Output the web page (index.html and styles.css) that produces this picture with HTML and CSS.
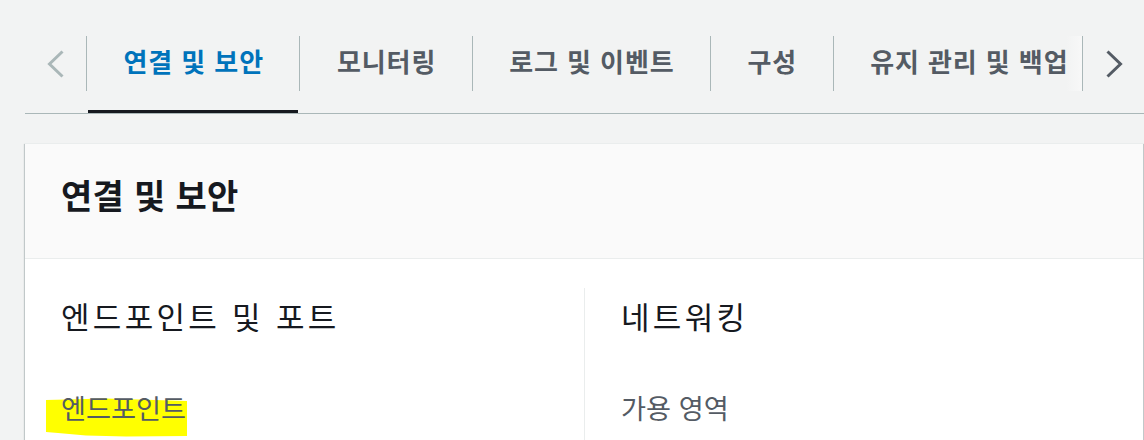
FILE: index.html
```html
<!DOCTYPE html>
<html lang="ko">
<head>
<meta charset="utf-8">
<title>연결 및 보안</title>
<link rel="stylesheet" href="styles.css">
</head>
<body>
<nav class="tabs">
  <button class="nav-btn prev" aria-label="이전">
    <svg width="20" height="30" viewBox="0 0 20 30"><polyline points="16.5,2.5 3.5,15 16.5,27.5" fill="none" stroke="currentColor" stroke-width="3"/></svg>
  </button>
  <div class="tab-scroller">
    <div class="tab active"><span class="tab-label">연결 및 보안</span></div>
    <div class="tab"><span class="tab-label">모니터링</span></div>
    <div class="tab"><span class="tab-label">로그 및 이벤트</span></div>
    <div class="tab"><span class="tab-label">구성</span></div>
    <div class="tab"><span class="tab-label">유지 관리 및 백업</span></div>
  </div>
  <div class="tab-end">
    <button class="nav-btn next" aria-label="다음">
      <svg width="20" height="30" viewBox="0 0 20 30"><polyline points="3.5,2.5 16.5,15 3.5,27.5" fill="none" stroke="currentColor" stroke-width="3"/></svg>
    </button>
  </div>
</nav>

<section class="card">
  <header class="card-header">
    <h2 class="card-title">연결 및 보안</h2>
  </header>
  <div class="card-body">
    <div class="col">
      <h3 class="col-title">엔드포인트 및 포트</h3>
      <div class="field">
        <svg class="highlight" width="141" height="39" viewBox="0 0 141 39"><path d="M0,2 L60,0.5 L141,3 L141,38 L80,38.5 L40,37.5 L12,35 L0,34 Z" fill="#ffff00"/></svg>
        <span class="label">엔드포인트</span>
      </div>
    </div>
    <div class="col">
      <h3 class="col-title">네트워킹</h3>
      <div class="field">
        <span class="label">가용 영역</span>
      </div>
    </div>
  </div>
</section>
</body>
</html>
```

FILE: styles.css
```css
* { box-sizing: border-box; }

body {
  margin: 0;
  background: #f2f3f3;
  font-family: "Noto Sans CJK KR", "Noto Sans", sans-serif;
  color: #16191f;
}

.tabs {
  display: flex;
  align-items: stretch;
  height: 114px;
  margin-left: 25px;
  border-bottom: 1px solid #aab7b8;
}

.nav-btn {
  flex: none;
  width: 61px;
  border: 0;
  background: transparent;
  padding: 36px 0 0;
  display: flex;
  justify-content: center;
  align-items: flex-start;
  cursor: pointer;
}

.nav-btn svg { display: block; }

.prev { color: #aab7b8; }
.prev svg { margin-top: 12.5px; }

.tab-scroller {
  position: relative;
  flex: 1;
  min-width: 0;
  display: flex;
  overflow: hidden;
}

.tab-scroller::after {
  content: "";
  position: absolute;
  right: 0;
  top: 36px;
  width: 16px;
  height: 55px;
  background: linear-gradient(to right, rgba(250, 250, 250, 0), rgba(250, 250, 250, 0.7));
}

.tab {
  position: relative;
  flex: none;
  display: flex;
  align-items: flex-start;
  padding-top: 36px;
}

.tab-label {
  display: block;
  border-left: 1px solid #aab7b8;
  padding: 6.5px 35.5px 12.5px 36.5px;
  line-height: 36px;
  font-size: 26px;
  letter-spacing: 0.9px;
  font-weight: 700;
  color: #545b64;
  white-space: nowrap;
}

.tab.active .tab-label { color: #0073bb; }

.tab.active::after {
  content: "";
  position: absolute;
  left: 2px;
  right: 1px;
  bottom: 0;
  height: 3px;
  background: #16191f;
}

.tab-end {
  flex: none;
  display: flex;
  align-items: flex-start;
  padding-top: 36px;
}

.next {
  width: 62px;
  height: 55px;
  padding: 0 0 0 1px;
  border-left: 1px solid #aab7b8;
  align-items: center;
  color: #545b64;
}

.card {
  margin: 29px 0 0 25px;
  width: 1118px;
  background: #fff;
  border-top: 1px solid #eaeded;
  box-shadow: 1px 1px 1px 0 rgba(0, 28, 36, 0.2), -1px 1px 1px 0 rgba(0, 28, 36, 0.2);
}

.card-header {
  background: #fafafa;
  border-bottom: 1px solid #eaeded;
  padding: 31px 36px 43px;
}

.card-title {
  margin: 0;
  font-size: 34px;
  letter-spacing: 0.3px;
  line-height: 40px;
  font-weight: 700;
  color: #16191f;
}

.card-body {
  display: grid;
  grid-template-columns: 560px 1fr;
  padding-top: 29px;
}

.col {
  padding: 10px 36px 40px;
}

.col:first-child { border-right: 1px solid #eaeded; }

.col-title {
  margin: 0;
  font-size: 31px;
  letter-spacing: 3.3px;
  line-height: 36px;
  font-weight: 400;
  color: #16191f;
}

.field {
  position: relative;
  margin-top: 55px;
}

.label {
  position: relative;
  display: block;
  font-size: 27.2px;
  line-height: 36px;
  color: #545b64;
}

.highlight {
  position: absolute;
  left: -15px;
  top: 9px;
  display: block;
}
```
